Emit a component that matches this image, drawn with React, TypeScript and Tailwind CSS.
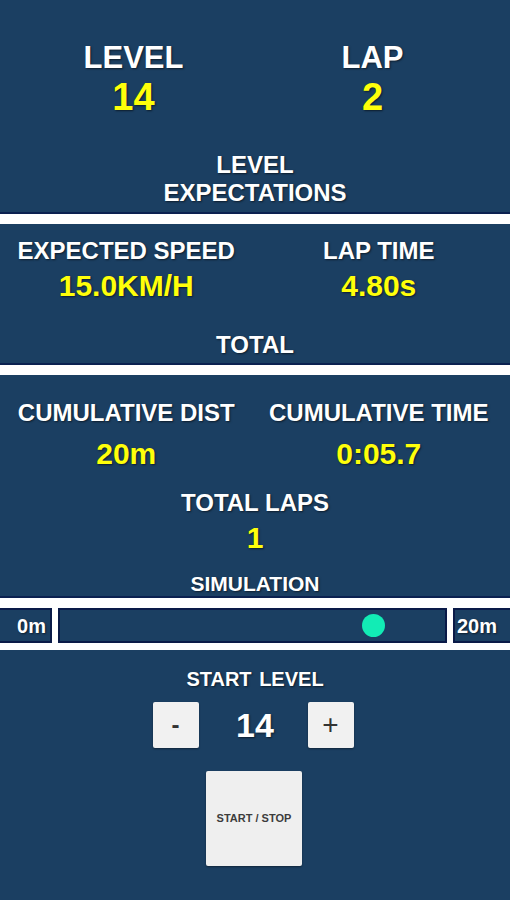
const shadow = '[text-shadow:1px_1px_2px_rgba(0,0,0,0.55)]';

function Divider() {
  return <div className="h-[12px] border-t-2 border-[#0b2150] bg-white" />;
}

function Stat({ label, value }: { label: string; value: string }) {
  return (
    <div className="flex flex-col items-center">
      <div className={`text-[24px] leading-[24px] font-bold text-white whitespace-nowrap ${shadow}`}>{label}</div>
      <div className={`mt-[8px] text-[30px] leading-[30px] font-bold text-[#ffff0a] ${shadow}`}>{value}</div>
    </div>
  );
}

export default function App() {
  return (
    <div className="w-[510px] h-[900px] bg-[#1b3f62] overflow-hidden font-['Liberation_Sans',Arial,sans-serif]">
      {/* level / lap */}
      <div className="pt-[42px] pb-[5px]">
        <div className="grid grid-cols-2 pl-[14px] pr-[18px]">
          <div className="flex flex-col items-center">
            <div className={`text-[31px] leading-[31px] font-bold text-white ${shadow}`}>LEVEL</div>
            <div className={`mt-[5px] text-[38px] leading-[38px] font-bold text-[#ffff0a] ${shadow}`}>14</div>
          </div>
          <div className="flex flex-col items-center">
            <div className={`text-[31px] leading-[31px] font-bold text-white ${shadow}`}>LAP</div>
            <div className={`mt-[5px] text-[38px] leading-[38px] font-bold text-[#ffff0a] ${shadow}`}>2</div>
          </div>
        </div>
        <div className={`mt-[35px] text-center text-[24px] leading-[28px] font-bold text-white ${shadow}`}>
          LEVEL
          <br />
          EXPECTATIONS
        </div>
      </div>
      <Divider />

      {/* expectations */}
      <div className="pt-[15px] pb-[6px]">
        <div className="grid grid-cols-2 pr-[5px]">
          <Stat label="EXPECTED SPEED" value="15.0KM/H" />
          <Stat label="LAP TIME" value="4.80s" />
        </div>
        <div className={`mt-[32px] text-center text-[24px] leading-[24px] font-bold text-white ${shadow}`}>TOTAL</div>
      </div>
      <Divider />

      {/* totals */}
      <div className="pt-[26px]">
        <div className="grid grid-cols-2 pr-[5px]">
          <div className="flex flex-col items-center">
            <div className={`text-[24px] leading-[24px] font-bold text-white whitespace-nowrap ${shadow}`}>CUMULATIVE DIST</div>
            <div className={`mt-[14px] text-[30px] leading-[30px] font-bold text-[#ffff0a] ${shadow}`}>20m</div>
          </div>
          <div className="flex flex-col items-center">
            <div className={`text-[24px] leading-[24px] font-bold text-white whitespace-nowrap ${shadow}`}>CUMULATIVE TIME</div>
            <div className={`mt-[14px] text-[30px] leading-[30px] font-bold text-[#ffff0a] ${shadow}`}>0:05.7</div>
          </div>
        </div>
        <div className="mt-[22px] flex flex-col items-center">
          <div className={`text-[24px] leading-[24px] font-bold text-white ${shadow}`}>TOTAL LAPS</div>
          <div className={`mt-[8px] text-[30px] leading-[30px] font-bold text-[#ffff0a] ${shadow}`}>1</div>
        </div>
        <div className={`mt-[20px] text-center text-[21px] leading-[21px] font-bold text-white ${shadow}`}>SIMULATION</div>
      </div>

      {/* simulation bar */}
      <div className="mt-[2px] border-t-2 border-[#0b2150] bg-white pt-[10px] pb-[7px]">
        <div className="flex h-[35px] gap-[6px]">
          <div className="w-[52px] border-y-2 border-r-2 border-[#0a1a48] bg-[#1b3f62] flex items-center justify-end pr-[4px]">
            <span className={`text-[20px] font-bold text-white ${shadow}`}>0m</span>
          </div>
          <div className="relative flex-1 border-2 border-[#0a1a48] bg-[#1b3f62]">
            <div className="absolute left-[302px] top-[4px] w-[23px] h-[23px] rounded-full bg-[#12ecb5]" />
          </div>
          <div className="w-[57px] border-y-2 border-l-2 border-[#0a1a48] bg-[#1b3f62] flex items-center pl-[2px]">
            <span className={`text-[20px] font-bold text-white ${shadow}`}>20m</span>
          </div>
        </div>
      </div>

      {/* controls */}
      <div className="pt-[19px] flex flex-col items-center">
        <div className={`text-[20px] leading-[20px] font-bold text-white [word-spacing:2px] ${shadow}`}>START LEVEL</div>
        <div className="mt-[13px] mr-[4px] flex items-center">
          <button className="w-[46px] h-[46px] rounded-[2px] bg-[#f1f1f1] shadow-[0_1px_2px_rgba(0,0,0,0.4)] text-[24px] leading-none font-bold text-[#333] flex items-center justify-center">
            -
          </button>
          <div className={`w-[109px] pl-[4px] text-center text-[34px] leading-[34px] font-bold text-white ${shadow}`}>14</div>
          <button className="w-[46px] h-[46px] rounded-[2px] bg-[#f1f1f1] shadow-[0_1px_2px_rgba(0,0,0,0.4)] text-[28px] leading-none text-[#333] flex items-center justify-center">
            +
          </button>
        </div>
        <button className="mt-[23px] mr-[2px] w-[96px] h-[95px] rounded-[2px] bg-[#efefef] shadow-[0_1px_2px_rgba(0,0,0,0.4)] flex items-center justify-center text-[11px] font-bold text-[#3c3c3c] whitespace-nowrap">
          START / STOP
        </button>
      </div>
    </div>
  );
}
